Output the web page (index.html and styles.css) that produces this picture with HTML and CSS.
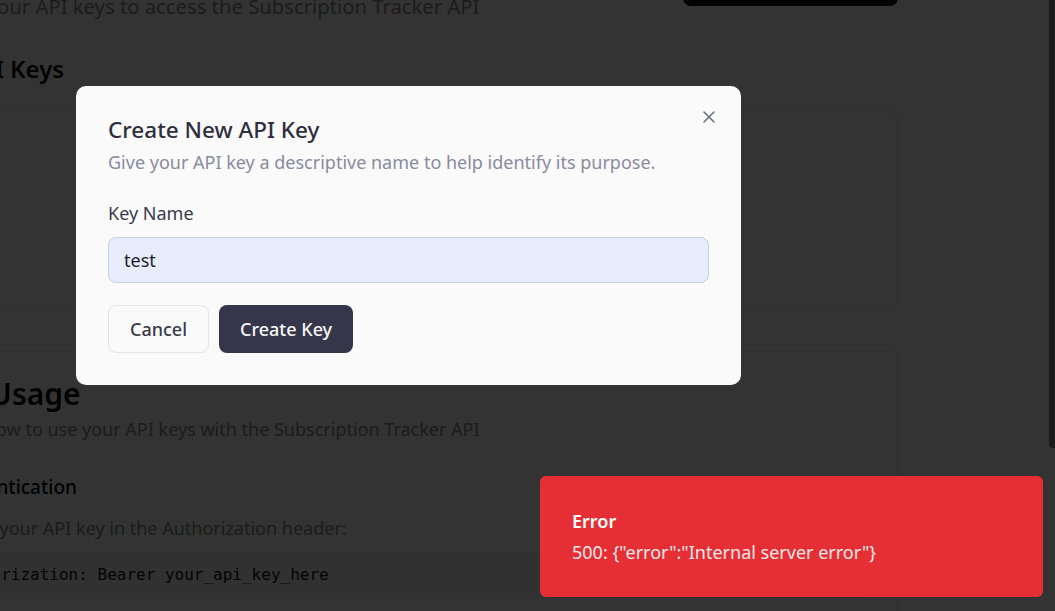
FILE: index.html
```html
<!DOCTYPE html>
<html lang="en">
<head>
<meta charset="utf-8">
<title>API Keys</title>
<link rel="stylesheet" href="styles.css">
</head>
<body>
  <main class="page">
    <header class="page-head">
      <div class="page-head-text">
        <h1 class="page-title">API Keys</h1>
        <p class="lead">Manage your API keys to access the Subscription Tracker API</p>
      </div>
      <button class="btn-primary-page">Create API Key</button>
    </header>

    <section class="keys-section">
      <h2 class="section-title">Your API Keys</h2>
      <div class="card card-keys">
        <div class="empty">
          <p class="empty-title">No API keys yet</p>
          <p class="empty-sub">Create your first API key to get started</p>
        </div>
      </div>
    </section>

    <section class="card card-usage">
      <h2 class="card-title">API Usage</h2>
      <p class="desc">Learn how to use your API keys with the Subscription Tracker API</p>
      <h3 class="sub-title">Authentication</h3>
      <p class="body-text">Include your API key in the Authorization header:</p>
      <pre class="code">Authorization: Bearer your_api_key_here</pre>
    </section>
  </main>

  <div class="overlay"></div>

  <div class="dialog" role="dialog">
    <button class="close" aria-label="Close">
      <svg width="14" height="14" viewBox="0 0 14 14"><path d="M2 2L12 12M12 2L2 12" stroke="currentColor" stroke-width="1.5" stroke-linecap="round"/></svg>
    </button>
    <h2 class="dialog-title">Create New API Key</h2>
    <p class="dialog-desc">Give your API key a descriptive name to help identify its purpose.</p>
    <label class="field-label" for="keyname">Key Name</label>
    <input id="keyname" class="field-input" type="text" value="test">
    <div class="dialog-actions">
      <button class="btn btn-outline">Cancel</button>
      <button class="btn btn-dark">Create Key</button>
    </div>
  </div>

  <div class="toast">
    <div class="toast-title">Error</div>
    <div class="toast-msg">500: {"error":"Internal server error"}</div>
  </div>

  <div class="scroll-thumb"></div>
</body>
</html>
```

FILE: styles.css
```css
* { box-sizing: border-box; }

html, body {
  margin: 0;
  padding: 0;
  height: 100%;
  overflow: hidden;
}

body {
  background: #ffffff;
  font-family: "Noto Sans", "Open Sans", sans-serif;
  color: #09090b;
}

.page {
  width: 994px;
  margin-left: -96px;
  margin-top: -52px;
}

.page-head {
  display: flex;
  align-items: center;
  justify-content: space-between;
}

.page-title {
  margin: 0 0 4px;
  font-size: 33px;
  line-height: 40px;
  font-weight: 700;
}

.lead {
  margin: 0;
  font-size: 20.25px;
  line-height: 28px;
  color: #8a8a8a;
}

.btn-primary-page {
  width: 215px;
  height: 45px;
  border: 0;
  border-radius: 8px;
  background: #0a0a0c;
  color: #fff;
  font: 500 16px "Noto Sans", sans-serif;
  margin-top: -2px;
}

.keys-section {
  margin-top: 33px;
}

.section-title {
  margin: 0 0 24px;
  font-size: 24px;
  line-height: 32px;
  font-weight: 600;
}

.card {
  border: 1px solid #e8e8e8;
  border-radius: 12px;
  background: #fff;
}

.card-keys {
  height: 203px;
  display: flex;
  align-items: center;
  justify-content: center;
}

.empty { text-align: center; }
.empty-title { margin: 0; font-size: 18px; color: #333; }
.empty-sub { margin: 4px 0 0; font-size: 14px; color: #888; }

.card-usage {
  margin-top: 33px;
  padding: 30px 27px 27px;
  height: 400px;
}

.card-title {
  margin: 0;
  font-size: 30px;
  line-height: 36px;
  font-weight: 600;
}

.desc {
  margin: 4px 0 0;
  font-size: 18px;
  line-height: 27px;
  color: #8a8a8a;
}

.sub-title {
  margin: 30px 0 0 10px;
  font-size: 19px;
  line-height: 28px;
  font-weight: 500;
}

.body-text {
  margin: 14px 0 0;
  font-size: 18px;
  line-height: 27px;
  color: #8a8a8a;
}

.code {
  margin: 10px 0 0;
  padding: 10px 21px;
  background: #f4f4f5;
  border-radius: 6px;
  font-family: "DejaVu Sans Mono", monospace;
  font-size: 16px;
  line-height: 26px;
  color: #111;
}

.overlay {
  position: fixed;
  inset: 0;
  background: rgba(0, 0, 0, 0.8);
}

.dialog {
  position: fixed;
  left: 76px;
  top: 86px;
  width: 665px;
  padding: 30px 32px 32px;
  background: #fafafa;
  border-radius: 10px;
  color: #2e2e3e;
}

.close {
  position: absolute;
  right: 25px;
  top: 24px;
  width: 14px;
  height: 14px;
  padding: 0;
  border: 0;
  background: none;
  color: #6b6b7a;
  display: flex;
}

.dialog-title {
  margin: 0;
  font-size: 22.5px;
  line-height: 28px;
  font-weight: 500;
  color: #2e2e3e;
}

.dialog-desc {
  margin: 6px 0 0;
  font-size: 18px;
  line-height: 24px;
  color: #8a8aa0;
}

.field-label {
  display: block;
  margin-top: 27px;
  font-size: 18px;
  line-height: 24px;
  color: #3a3a4a;
}

.field-input {
  display: block;
  width: 100%;
  height: 46px;
  margin-top: 12px;
  padding: 0 15px;
  border: 1px solid #cbcde0;
  border-radius: 8px;
  background: #e8edfd;
  font: 18px "Noto Sans", sans-serif;
  color: #1e1e28;
  outline: none;
}

.dialog-actions {
  display: flex;
  gap: 10px;
  margin-top: 22px;
}

.btn {
  height: 48px;
  padding: 0 21px;
  border-radius: 8px;
  font: 500 18px "Noto Sans", sans-serif;
}

.btn-outline {
  border: 1px solid #e4e4e8;
  background: #fafafa;
  color: #3a3a4a;
}

.btn-dark {
  border: 0;
  background: #35364a;
  color: #f6f6f8;
}

.toast {
  position: fixed;
  left: 540px;
  top: 476px;
  width: 503px;
  height: 121px;
  padding: 33px 32px;
  border-radius: 6px;
  background: #e62e35;
  color: #fff;
}

.toast-title {
  font-size: 18px;
  line-height: 24px;
  font-weight: 600;
}

.toast-msg {
  margin-top: 7px;
  font-size: 18px;
  line-height: 24px;
  color: #fbeaea;
}

.scroll-thumb {
  position: fixed;
  right: 0;
  top: 0;
  width: 6px;
  height: 448px;
  background: #1b1b1b;
  border-radius: 0 0 0 4px;
}
```
